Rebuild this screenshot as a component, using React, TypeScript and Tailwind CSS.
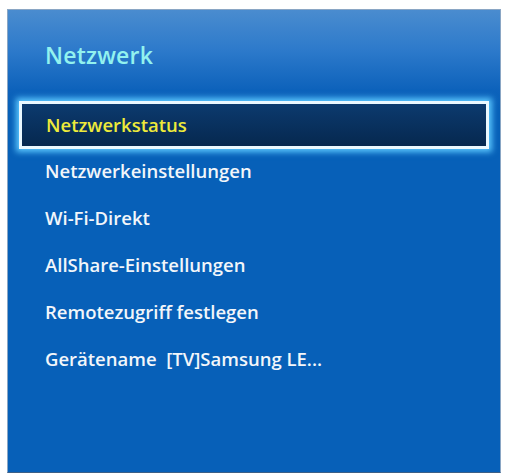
import React from 'react';

const items = [
  'Netzwerkeinstellungen',
  'Wi-Fi-Direkt',
  'AllShare-Einstellungen',
  'Remotezugriff festlegen',
  'Gerätename  [TV]Samsung LE...',
];

export default function App() {
  return (
    <div className="w-[507px] h-[476px] bg-white pt-[9px] pl-[7px]" style={{ fontFamily: '"Open Sans", "Noto Sans", sans-serif' }}>
      <div className="w-[494px] h-[464px] border border-[#8aa6c4] border-b-[#3c5f86] bg-[#0760b8] bg-[linear-gradient(to_bottom,#4a8ccf_0px,#2d7acb_40px,#0d62bb_80px,#0760b8_100px)] flex flex-col">
        <div className="h-[91px] pl-[37px] pt-[28px]">
          <span className="text-[23px] font-semibold text-[#92f2ef] tracking-[0.2px]">Netzwerk</span>
        </div>
        <div className="mx-[11px] h-[48px] border-[3px] border-[#eaf8ff] shadow-[0_0_6px_3px_#5cc8ff] bg-[linear-gradient(to_bottom,#0c3a6e,#06284f)] flex items-center pl-[24px]">
          <span className="text-[18.5px] font-semibold text-[#eeea3a] tracking-[0px]">Netzwerkstatus</span>
        </div>
        <div className="flex flex-col pl-[37px] -mt-[2px]">
          {items.map((t) => (
            <div key={t} className="h-[47px] flex items-center">
              <span className="text-[18.5px] font-semibold text-[#f2f6fa] tracking-[0px] whitespace-pre">{t}</span>
            </div>
          ))}
        </div>
      </div>
    </div>
  );
}
